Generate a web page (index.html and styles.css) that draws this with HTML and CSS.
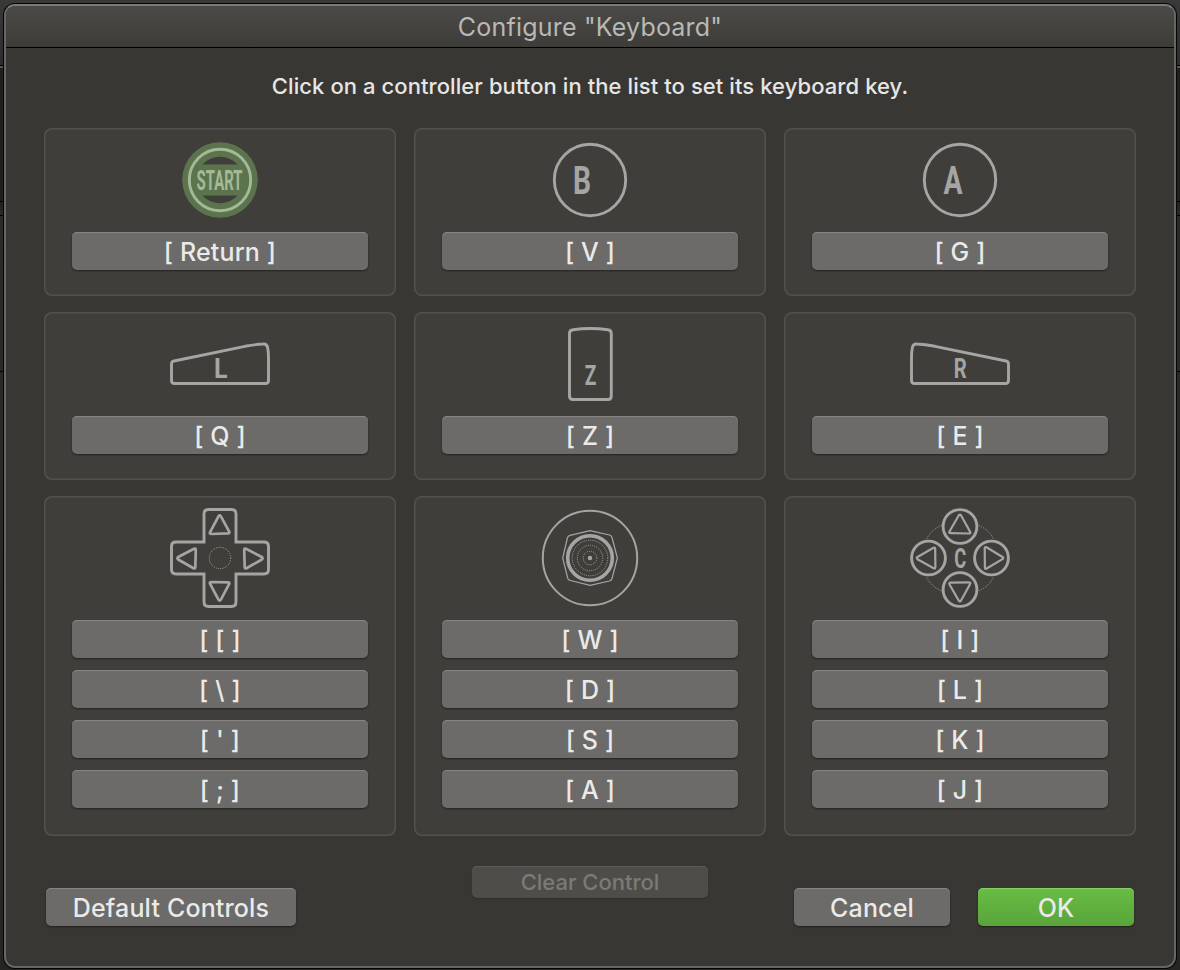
FILE: index.html
```
<!DOCTYPE html>
<html lang="en">
<head>
<meta charset="utf-8">
<title>Configure "Keyboard"</title>
<link rel="stylesheet" href="styles.css">
</head>
<body>
<main class="window">
  <header class="titlebar"><span class="title">Configure "Keyboard"</span></header>
  <p class="hint"><span>Click on a controller button in the list to set its keyboard key.</span></p>
  <section class="grid">
    <div class="card">
      <svg class="icon" viewBox="0 -2 120 104">
        <circle class="glow" cx="60" cy="50" r="37.8"/>
        <circle class="hole" cx="60" cy="50" r="23.3"/>
        <path class="glow" d="M36 35.500L43 34.500H77L84 35.500V64.500L77 65.500H43L36 64.500Z"/>
        <circle class="ring" cx="60" cy="50" r="30.700"/>
        <text class="start" x="36.5" y="60" font-size="28" textLength="46" lengthAdjust="spacingAndGlyphs">START</text>
      </svg>
      <button class="key">[ Return ]</button>
    </div>
    <div class="card">
      <svg class="icon" viewBox="0 -2 120 104">
        <circle cx="60" cy="50" r="35.7"/>
        <text x="43" y="64" font-size="39" textLength="18" lengthAdjust="spacingAndGlyphs">B</text>
      </svg>
      <button class="key">[ V ]</button>
    </div>
    <div class="card">
      <svg class="icon" viewBox="0 -2 120 104">
        <circle cx="60" cy="50" r="35.7"/>
        <text x="43.5" y="64" font-size="39" textLength="19" lengthAdjust="spacingAndGlyphs">A</text>
      </svg>
      <button class="key">[ G ]</button>
    </div>
    <div class="card">
      <svg class="icon" viewBox="0 -8 120 104">
        <path d="M11.5 44Q11.5 41.5 14 41L85 26.3Q95 24.500 103 24Q106.500 23.500 107.500 27Q108.500 31 108.500 38V60.500Q108.500 63.500 105.500 63.500H14.500Q11.500 63.500 11.500 60.500Z"/>
        <text x="54" y="58" font-size="28" textLength="13.500" lengthAdjust="spacingAndGlyphs">L</text>
      </svg>
      <button class="key">[ Q ]</button>
    </div>
    <div class="card">
      <svg class="icon" viewBox="0 -8 120 104">
        <path d="M39.500 13.500Q39.500 10.200 43 9.800Q60 7.200 78 9.800Q81.300 10.200 81.300 13.500V76Q81.300 79.500 78 79.500H43Q39.500 79.500 39.500 76Z"/>
        <text x="54.700" y="65" font-size="28" textLength="11.600" lengthAdjust="spacingAndGlyphs">Z</text>
      </svg>
      <button class="key">[ Z ]</button>
    </div>
    <div class="card">
      <svg class="icon" viewBox="0 -8 120 104">
        <path d="M108.500 44Q108.500 41.500 106 41L35 26.300Q25 24.500 17 24Q13.500 23.500 12.500 27Q11.500 31 11.500 38V60.500Q11.500 63.500 14.500 63.500H105.500Q108.500 63.500 108.500 60.500Z"/>
        <text x="53.800" y="58" font-size="28" textLength="13" lengthAdjust="spacingAndGlyphs">R</text>
      </svg>
      <button class="key">[ E ]</button>
    </div>
    <div class="card">
      <svg class="icon tall" viewBox="0 -4 120 124">
        <path d="M44 42V14Q44 9.500 48.500 9.500H71.500Q76 9.500 76 14V42H104Q108.500 42 108.500 46.500V69.500Q108.500 74 104 74H76V102Q76 106.500 71.500 106.500H48.500Q44 106.500 44 102V74H16Q11.500 74 11.500 69.500V46.500Q11.500 42 16 42Z"/>
        <g class="arrows">
          <path d="M58.600 16.200L50 32.300Q49.200 34 51.200 34L68 33.300Q70 33.200 69.200 31.700L60.800 16.200Q59.700 14.500 58.600 16.200Z"/>
          <path d="M58.600 99.800L50 83.700Q49.200 82 51.200 82L68 82.300Q70 82.400 69.200 84L60.800 99.800Q59.700 101.500 58.600 99.800Z"/>
          <path d="M18.200 57L34 48.700Q35.700 48 35.800 50L35.300 67Q35.200 69 33.500 68.200L18.200 59.500Q16.600 58.300 18.200 57Z"/>
          <path d="M101.800 57L86 48.700Q84.300 48 84.200 50L84.700 67Q84.800 69 86.500 68.200L101.800 59.500Q103.400 58.300 101.800 57Z"/>
        </g>
        <circle class="dots" cx="60" cy="58" r="10.700"/>
      </svg>
      <button class="key">[ [ ]</button>
      <button class="key">[ \ ]</button>
      <button class="key">[ ' ]</button>
      <button class="key">[ ; ]</button>
    </div>
    <div class="card">
      <svg class="icon tall" viewBox="0 -4 120 124">
        <circle class="thin" cx="60" cy="58" r="47.200"/>
        <path class="fine" d="M60 30.600L79.500 35Q81.500 35.500 82 37.500L87.400 58L82 78.500Q81.500 80.500 79.500 81L60 85.400L40.500 80.500Q38.300 80 37.800 78.500L32.700 58L37.500 37.500Q38 35.800 40 35.300Z"/>
        <circle class="thick" cx="60" cy="58" r="22.300"/>
        <circle class="dots" cx="60" cy="58" r="17.800"/>
        <circle class="dots" cx="60" cy="58" r="12.700"/>
        <circle class="dots" cx="60" cy="58" r="6.800"/>
        <circle class="dot" cx="60" cy="58" r="2.200"/>
      </svg>
      <button class="key">[ W ]</button>
      <button class="key">[ D ]</button>
      <button class="key">[ S ]</button>
      <button class="key">[ A ]</button>
    </div>
    <div class="card">
      <svg class="icon tall" viewBox="0 -4 120 124">
        <path class="dots" d="M26.500 39Q31.500 29.500 43 24.500M77 24.500Q89 29.500 93.500 39M26.500 77Q31.500 87 43 91.500M77 91.500Q89 87 93.500 77"/>
        <circle cx="60" cy="26.500" r="16.900"/>
        <circle cx="28.500" cy="58" r="16.900"/>
        <circle cx="91.500" cy="58" r="16.900"/>
        <circle cx="60" cy="89.500" r="16.900"/>
        <g class="arrows slim">
          <path d="M58.700 15.500L49.500 31.500Q48.600 33.200 50.600 33.200L69 33.500Q71 33.500 70.100 31.800L61.100 15.500Q59.900 13.800 58.700 15.500Z"/>
          <path d="M58.700 100.500L49.500 84.500Q48.600 82.800 50.600 82.700L69 82.300Q71 82.300 70.100 84L61.100 100.500Q59.900 102.200 58.700 100.500Z"/>
          <path d="M17.500 57L33.500 47.800Q35.200 47 35.200 49L35.400 67Q35.400 69 33.700 68.200L17.500 59.200Q15.900 58 17.500 57Z"/>
          <path d="M102.500 57L86.500 47.300Q84.800 46.500 84.700 48.500L84.900 67.500Q84.900 69.500 86.600 68.500L102.500 59.200Q104.100 58 102.500 57Z"/>
        </g>
        <text x="54.300" y="67.500" font-size="27" textLength="12" lengthAdjust="spacingAndGlyphs">C</text>
      </svg>
      <button class="key">[ I ]</button>
      <button class="key">[ L ]</button>
      <button class="key">[ K ]</button>
      <button class="key">[ J ]</button>
    </div>
  </section>
  <footer class="footer">
    <button class="key default">Default Controls</button>
    <button class="key clear" disabled>Clear Control</button>
    <button class="key cancel">Cancel</button>
    <button class="key ok">OK</button>
  </footer>
</main>
</body>
</html>
```
FILE: styles.css
```
* { box-sizing: border-box; }
body {
  margin: 0;
  padding: 4px;
  height: 970px;
  overflow: hidden;
  font-family: Inter, "Liberation Sans", sans-serif;
  color: #e6e6e4;
  background:
    linear-gradient(#000, #000) 0 65px / 100% 1px no-repeat,
    linear-gradient(#555, #555) 0 66px / 100% 2px no-repeat,
    linear-gradient(#000, #000) 0 201px / 100% 1px no-repeat,
    linear-gradient(#000, #000) 0 215px / 100% 1px no-repeat,
    linear-gradient(#000, #000) 0 371px / 100% 1px no-repeat,
    linear-gradient(#393939 0, #2d2d2d 65px, #211f1e 68px, #211f1e 200px, #2a2a29 216px, #252524 100%);
}
.window {
  width: 1172px;
  height: 964px;
  border: 2px solid #666664;
  border-top-color: #7b7b77;
  border-radius: 11px;
  background: #393733;
  box-shadow: 0 0 0 1px #050505;
  overflow: hidden;
}
.titlebar {
  height: 42px;
  display: flex;
  justify-content: center;
  align-items: center;
  background: linear-gradient(#4b4a46, #3d3c39);
  border-bottom: 1px solid #000;
  font-size: 25px;
  color: #b8b8b5;
}
.title { letter-spacing: 0.2px; }
.hint {
  margin: 0;
  height: 80px;
  display: flex;
  justify-content: center;
  padding-top: 24px;
  font-size: 22px;
  font-weight: 500;
  line-height: 28px;
  letter-spacing: 0.08px;
}
.grid {
  display: grid;
  grid-template-columns: repeat(3, 352px);
  grid-template-rows: 168px 168px 340px;
  gap: 16px 18px;
  padding-left: 38px;
}
.card {
  display: flex;
  flex-direction: column;
  align-items: center;
  gap: 12px;
  border-radius: 8px;
  background: #403e3a;
  box-shadow: inset 0 0 0 1.500px #52514d;
}
.icon {
  flex: none;
  width: 120px;
  height: 104px;
  margin-bottom: -12px;
  overflow: visible;
  fill: none;
  stroke: #a5a5a3;
  stroke-width: 2.900;
}
.tall { height: 124px; }
.icon text {
  font-family: Roboto, sans-serif;
  font-weight: 700;
  fill: #a5a5a3;
  stroke: none;
}
.icon .start { fill: #a3b998; }
.glow { fill: #5b744d; stroke: none; }
.hole { fill: #403e3a; stroke: none; }
.ring { stroke: #a3b998; }
.thin { stroke-width: 2; }
.thick { stroke-width: 3.600; }
.fine { stroke-width: 1.200; }
.arrows { stroke-width: 2.700; }
.slim { stroke-width: 2.200; }
.dots { stroke-width: 1; stroke-dasharray: 1 1.200; }
.dot { fill: #a5a5a3; stroke: none; }
.key {
  flex: none;
  width: 296px;
  height: 38px;
  margin: 0;
  padding: 2px 0 0;
  border: 0;
  border-radius: 5px;
  background: #6c6b69;
  box-shadow: inset 0 1px #868583, 0 1px 2px rgba(0, 0, 0, .45);
  color: #eaeae8;
  font: 500 25px/36px Inter, "Liberation Sans", sans-serif;
  letter-spacing: 0.15px;
  white-space: nowrap;
}
.footer {
  display: flex;
  align-items: flex-start;
  padding: 52px 40px 0;
}
.default { width: 250px; }
.clear {
  width: 236px;
  height: 32px;
  margin: -22px 86px 0 176px;
  padding: 0;
  background: #4e4d49;
  box-shadow: inset 0 1px #5c5b57, 0 1px 1px rgba(0, 0, 0, .2);
  color: #7b7a77;
  font-size: 22px;
  line-height: 32px;
  letter-spacing: 0;
}
.cancel { width: 156px; }
.ok {
  width: 156px;
  margin-left: 28px;
  background: linear-gradient(#68bd44, #59a43a);
  box-shadow: inset 0 1px #84cc63, 0 1px 2px rgba(0, 0, 0, .45);
}
```
